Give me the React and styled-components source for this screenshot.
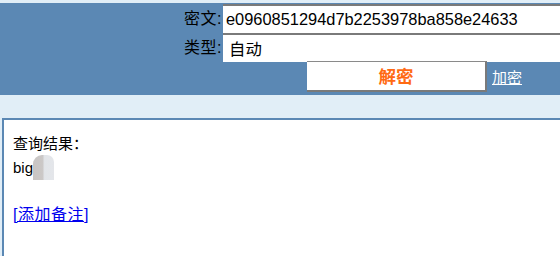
import React from "react";
import styled, { createGlobalStyle } from "styled-components";

const GlobalStyle = createGlobalStyle`
  html, body {
    margin: 0;
    padding: 0;
    background: #e1eef7;
    overflow: hidden;
  }
  body {
    font-family: "Liberation Sans", "Noto Sans CJK SC", sans-serif;
    font-size: 15px;
    color: #000;
  }
`;

const App = () => {
  return (
    <>
      <GlobalStyle />
      <Page>
        <Header>
          <Row>
            <Label>密文:</Label>
            <Field defaultValue="e0960851294d7b2253978ba858e24633" />
          </Row>
          <Row>
            <Label>类型:</Label>
            <Field defaultValue="自动" cjk />
          </Row>
          <ActionRow>
            <DecryptButton>解密</DecryptButton>
            <EncryptLink href="#">加密</EncryptLink>
          </ActionRow>
        </Header>
        <Result>
          <Line>查询结果：</Line>
          <Line>
            big<Thumb />
          </Line>
          <NoteLink href="#">[添加备注]</NoteLink>
        </Result>
      </Page>
    </>
  );
};

export default App;

const Page = styled.div`
  padding-top: 3px;
  height: 256px;
  display: flex;
  flex-direction: column;
`;

const Header = styled.div`
  background: #5b88b4;
  height: 92px;
  padding-top: 1px;
  box-sizing: border-box;
`;

const Row = styled.div`
  display: flex;
  align-items: center;
  height: 29px;
`;

const Label = styled.span`
  width: 223px;
  text-align: right;
  padding-right: 1px;
  box-sizing: border-box;
  font-size: 16px;
  line-height: 18px;
  letter-spacing: 0.5px;
  color: #000;
`;

const Field = styled.input`
  flex: 1;
  height: 29px;
  box-sizing: border-box;
  margin: 0;
  padding: 0 0 1px ${({ cjk }) => (cjk ? "6px" : "3px")};
  border: none;
  border-top: 2px solid #7a7a7a;
  background: #fff;
  font-family: "Liberation Sans", "Noto Sans CJK SC", sans-serif;
  font-size: 16.4px;
  line-height: 20px;
  color: #000;
  outline: none;
`;

const ActionRow = styled.div`
  display: flex;
  align-items: center;
  padding-left: 307px;
  margin-top: -1px;
`;

const DecryptButton = styled.button`
  width: 180px;
  height: 31px;
  box-sizing: border-box;
  margin: 0;
  padding: 0;
  background: #fff;
  border: none;
  border-top: 1px solid #8a8a8a;
  border-right: 2px solid #7a7a7a;
  border-bottom: 2px solid #7a7a7a;
  color: #ff6a13;
  font-family: "Noto Sans CJK SC", sans-serif;
  font-weight: bold;
  font-size: 17.5px;
  line-height: 26px;
`;

const EncryptLink = styled.a`
  margin-left: 5px;
  color: #fff;
  font-size: 15px;
  text-decoration: underline;
`;

const Result = styled.div`
  flex: 1;
  margin-top: 23px;
  margin-left: 2px;
  background: #fff;
  border-top: 2px solid #5b88b4;
  border-left: 2px solid #5b88b4;
  padding: 10px 10px 0 9px;
`;

const Line = styled.div`
  display: flex;
  align-items: center;
  height: 25px;
  font-size: 15px;
`;

const Thumb = styled.span`
  display: inline-block;
  width: 21px;
  height: 25px;
  border-radius: 9px 7px 0 0;
  background: linear-gradient(90deg, #c9c5c3 0%, #cbc8c7 45%, #e2e5e9 55%, #e4e6ea 100%);
`;

const NoteLink = styled.a`
  display: inline-block;
  margin-top: 21px;
  color: #0000ee;
  font-size: 16px;
  letter-spacing: 0.5px;
  text-decoration: underline;
`;
